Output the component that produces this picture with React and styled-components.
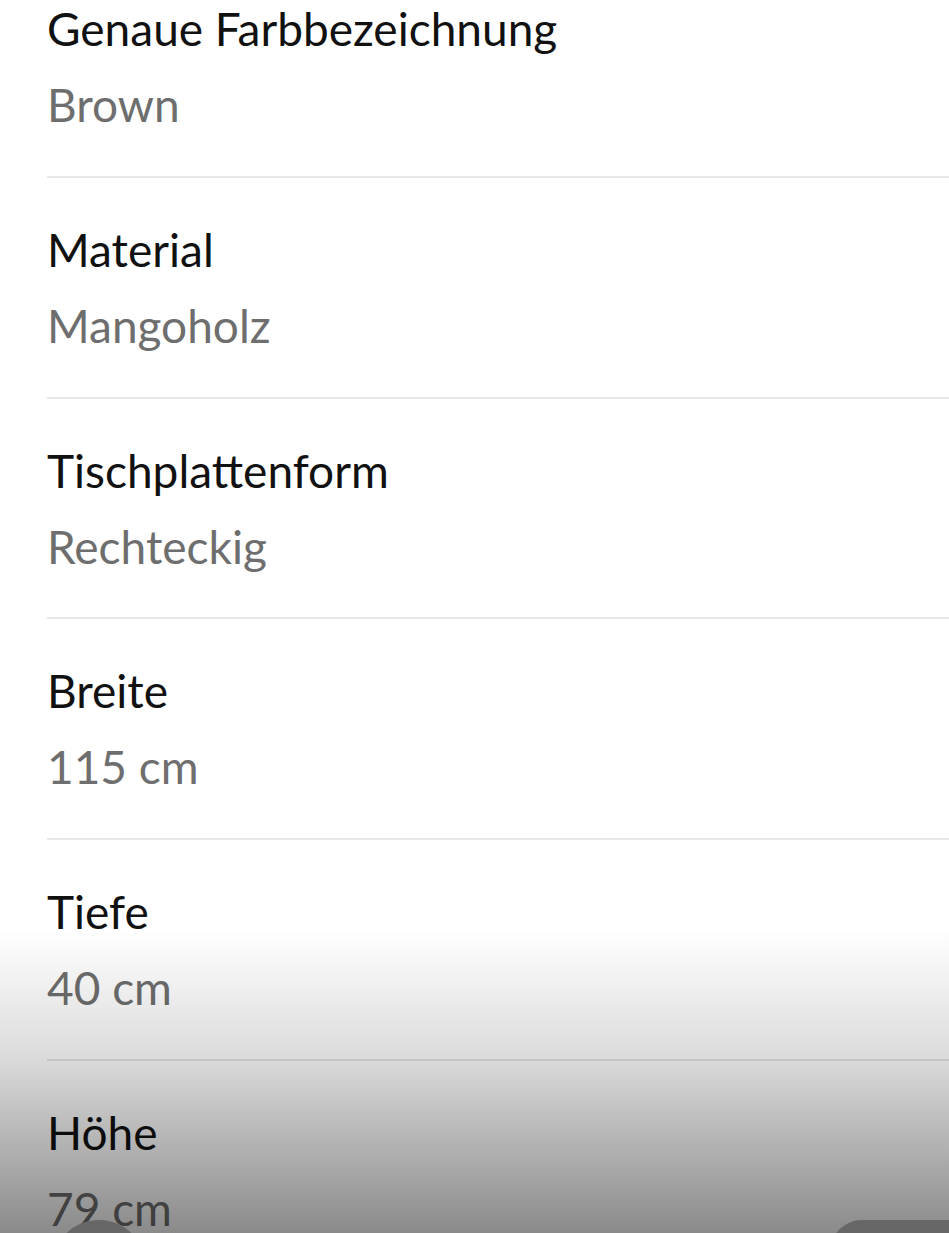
import styled, { createGlobalStyle } from "styled-components";

const GlobalStyle = createGlobalStyle`
  html, body {
    margin: 0;
    padding: 0;
    background: #ffffff;
  }
  body {
    font-family: "Lato", "Noto Sans", sans-serif;
    overflow: hidden;
  }
`;

const specs = [
  { label: "Genaue Farbbezeichnung", value: "Brown" },
  { label: "Material", value: "Mangoholz" },
  { label: "Tischplattenform", value: "Rechteckig" },
  { label: "Breite", value: "115 cm" },
  { label: "Tiefe", value: "40 cm" },
  { label: "Höhe", value: "79 cm" },
  { label: "Gewicht", value: "18 kg" },
];

export default function App() {
  return (
    <>
      <GlobalStyle />
      <Screen>
        <SpecList>
          {specs.map((spec) => (
            <SpecRow key={spec.label}>
              <Label>{spec.label}</Label>
              <Value>{spec.value}</Value>
            </SpecRow>
          ))}
        </SpecList>
        <Shade />
        <RoundButton />
        <PillButton />
      </Screen>
    </>
  );
}

const Screen = styled.div`
  position: relative;
  width: 949px;
  height: 1233px;
  overflow: hidden;
  background: #fff;
`;

const SpecList = styled.div`
  margin-top: -43px;
  padding-left: 47px;
  display: flex;
  flex-direction: column;
`;

const SpecRow = styled.div`
  padding: 34px 0 32.75px 0;
  border-bottom: 2px solid #e8e8e8;
  display: flex;
  flex-direction: column;
`;

const Label = styled.div`
  font-size: 46px;
  line-height: 76px;
  color: #111;
  white-space: nowrap;
`;

const Value = styled.div`
  font-size: 46px;
  line-height: 76px;
  color: #6e6e6e;
  white-space: nowrap;
`;

const Shade = styled.div`
  position: absolute;
  left: 0;
  right: 0;
  top: 930px;
  bottom: 0;
  background: linear-gradient(
    to bottom,
    rgba(0, 0, 0, 0) 0%,
    rgba(0, 0, 0, 0.14) 42%,
    rgba(0, 0, 0, 0.46) 100%
  );
  pointer-events: none;
`;

const RoundButton = styled.div`
  position: absolute;
  left: 52px;
  top: 1220px;
  width: 94px;
  height: 94px;
  border-radius: 50%;
  background: #676767;
`;

const PillButton = styled.div`
  position: absolute;
  left: 830px;
  top: 1220px;
  width: 300px;
  height: 94px;
  border-radius: 32px;
  background: #676767;
`;
